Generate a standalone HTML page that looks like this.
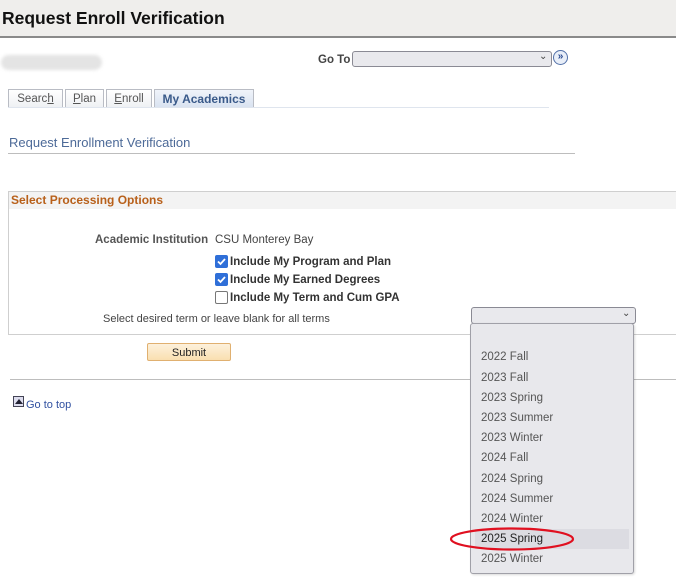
<!DOCTYPE html>
<html><head><style>
*{margin:0;padding:0;box-sizing:border-box}
body{width:676px;height:579px;overflow:hidden;background:#fff;font-family:"Liberation Sans",Arial,sans-serif;position:relative;font-size:12px;color:#333}
.a{position:absolute;white-space:nowrap}
.hdr{left:0;top:0;width:676px;height:38px;background:#efeeec;border-bottom:2px solid #8a8a8a}
.tab{position:absolute;top:89px;height:19px;border:1px solid #b9bcc4;border-bottom:none;background:linear-gradient(#fff,#eef0f3);color:#555;font-size:11.5px;text-align:center;line-height:18px}
.cb{position:absolute;left:215px;width:13px;height:13px;border-radius:2px}
.cb svg{display:block}
.on{background:#2f6fd8}
.off{border:1px solid #777;background:#fff}
.lbl{left:230px;font-weight:bold;color:#333;font-size:11.5px;line-height:13px}
.it{position:absolute;left:481px;font-size:11.5px;color:#555}
</style></head><body>
<div class="a hdr"></div>
<div class="a" style="left:2px;top:8px;font-size:17.5px;font-weight:bold;color:#111">Request Enroll Verification</div>
<div class="a" style="left:1px;top:55px;width:101px;height:15px;border-radius:8px;background:#e4e4e4;filter:blur(1.5px)"></div>
<div class="a" style="left:318px;top:54px;font-weight:bold;color:#444;font-size:11.5px">Go To</div>
<div class="a" style="left:352px;top:51px;width:200px;height:16px;border:1px solid #8a8a94;border-radius:3px;background:#e9e9ed"></div>
<div class="a" style="left:539px;top:51px;font-size:10px;color:#444">&#8964;</div>
<div class="a" style="left:553px;top:50px;width:15px;height:15px;border-radius:50%;border:1.5px solid #5270a8;background:#e8eef8;color:#2a4a90;font-size:10px;font-weight:bold;line-height:12px;text-align:center">»</div>
<div class="tab" style="left:8px;width:55px">Searc<u>h</u></div>
<div class="tab" style="left:65px;width:39px"><u>P</u>lan</div>
<div class="tab" style="left:106px;width:46px"><u>E</u>nroll</div>
<div class="tab" style="left:154px;width:100px;background:linear-gradient(#f0f4fa,#d8e2f0);color:#3a5a8a;font-weight:bold;font-size:12px">My Academics</div>
<div class="a" style="left:8px;top:107px;width:541px;height:1px;background:#dfe5ee"></div>
<div class="a" style="left:9px;top:135px;font-size:13px;color:#4d6a98">Request Enrollment Verification</div>
<div class="a" style="left:8px;top:153px;width:567px;height:1px;background:#bdbdbd"></div>
<div class="a" style="left:8px;top:191px;width:670px;height:144px;border:1px solid #cfcfcf"></div>
<div class="a" style="left:9px;top:192px;width:667px;height:17px;background:#f3f3f3"></div>
<div class="a" style="left:11px;top:193px;font-weight:bold;color:#b8601a;font-size:12px">Select Processing Options</div>
<div class="a" style="left:95px;top:234px;font-weight:bold;color:#555;font-size:11.5px">Academic Institution</div>
<div class="a" style="left:215px;top:234px;color:#444;font-size:11.5px">CSU Monterey Bay</div>
<div class="cb on" style="top:255px"><svg width="13" height="13"><path d="M3 6.5l2.5 2.5 4.5-5" stroke="#fff" stroke-width="1.8" fill="none"/></svg></div>
<div class="a lbl" style="top:256px">Include My Program and Plan</div>
<div class="cb on" style="top:273px"><svg width="13" height="13"><path d="M3 6.5l2.5 2.5 4.5-5" stroke="#fff" stroke-width="1.8" fill="none"/></svg></div>
<div class="a lbl" style="top:274px">Include My Earned Degrees</div>
<div class="cb off" style="top:291px"></div>
<div class="a lbl" style="top:292px">Include My Term and Cum GPA</div>
<div class="a" style="left:103px;top:313px;color:#444;font-size:11px">Select desired term or leave blank for all terms</div>
<div class="a" style="left:147px;top:343px;width:84px;height:18px;border:1px solid #e0b070;border-radius:2px;background:linear-gradient(#fdf1dc,#f9dfb0);text-align:center;line-height:18px;font-size:11px;color:#222">Submit</div>
<div class="a" style="left:10px;top:379px;width:666px;height:1px;background:#bdbdbd"></div>
<div class="a" style="left:13px;top:396px;width:11px;height:11px;border:1px solid #445;background:#dde"><div style="width:0;height:0;margin:2px auto 0;border-left:4px solid transparent;border-right:4px solid transparent;border-bottom:5px solid #223"></div></div>
<div class="a" style="left:26px;top:399px;color:#3050a0;font-size:11px">Go to top</div>
<div class="a" style="left:471px;top:307px;width:165px;height:17px;border:1px solid #8a8a94;border-radius:3px;background:#e9e9ed"></div>
<div class="a" style="left:622px;top:308px;font-size:10px;color:#444">&#8964;</div>
<div class="a" style="left:470px;top:323px;width:164px;height:251px;border:1px solid #a0a0a8;border-radius:3px;background:#e8e8ec;box-shadow:1px 1px 2px rgba(0,0,0,.15)"></div>
<div class="a" style="left:475px;top:529px;width:154px;height:20px;background:#dcdce2"></div>
<div class="it" style="top:351px">2022 Fall</div>
<div class="it" style="top:372px">2023 Fall</div>
<div class="it" style="top:392px">2023 Spring</div>
<div class="it" style="top:412px">2023 Summer</div>
<div class="it" style="top:432px">2023 Winter</div>
<div class="it" style="top:452px">2024 Fall</div>
<div class="it" style="top:473px">2024 Spring</div>
<div class="it" style="top:493px">2024 Summer</div>
<div class="it" style="top:513px">2024 Winter</div>
<div class="it" style="top:533px;color:#222">2025 Spring</div>
<div class="it" style="top:553px">2025 Winter</div>
<svg class="a" style="left:448px;top:525px" width="130" height="28"><ellipse cx="64" cy="14" rx="61" ry="10.5" fill="none" stroke="#e01020" stroke-width="2.2"/></svg>
</body></html>
